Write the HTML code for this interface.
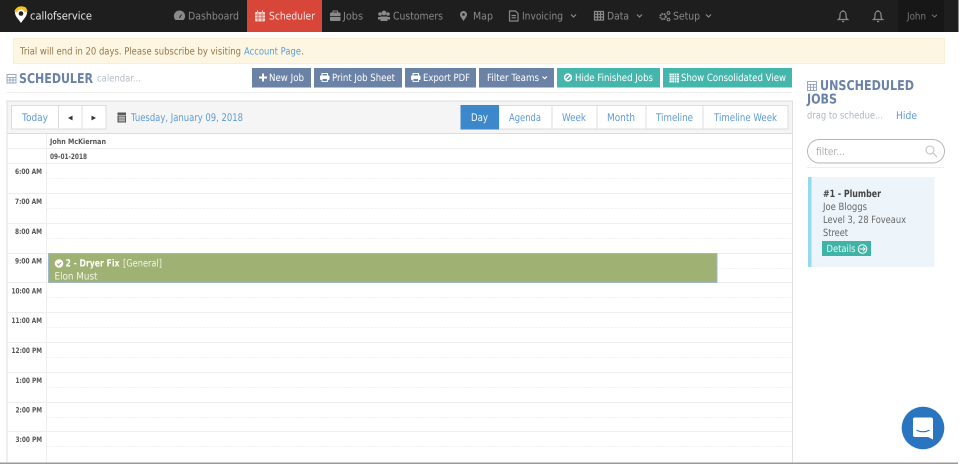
<!DOCTYPE html>
<html><head><meta charset="utf-8"><title>Scheduler</title>
<style>
html,body{margin:0;padding:0;background:#fff;width:960px;height:464px;overflow:hidden}
svg{display:block;position:absolute;left:0;top:0;font-size:10.500px;filter:blur(.3px)}
text{font-family:"DejaVu Sans","Liberation Sans",sans-serif;white-space:pre;text-rendering:geometricPrecision}
.nav{fill:#8a8a8a}
.btn{fill:#fff}
.bl{fill:#5b9bd6}
.t{font-size:7.400px;font-weight:bold;fill:#555}
.h{font-size:13.500px;font-weight:bold;fill:#6a82a6}
.ic{fill:none;stroke:#8a8a8a;stroke-width:1.2}
</style></head><body>
<svg width="960" height="464" viewBox="0 0 960 464">
<rect width="960" height="464" fill="#fff"/>
<!-- nav -->
<rect width="958.500" height="32" fill="#1e1e1e"/>
<rect x="247" width="75" height="32" fill="#d8463a"/>
<rect x="898" width="46" height="32" fill="#171717"/>
<!-- logo -->
<path d="M15 12.500a6 6 0 0 1 12 0c0 4-3.500 6.500-6 10.500C18.500 19 15 16.500 15 12.500z" fill="#fff"/>
<path d="M14.500 12a6.500 5.500 0 0 1 13 0l-3 .5a3.500 3 0 0 0-7 0z" fill="#f3c21c"/>
<path d="M17 9V7.500Q21 5 26 7.500l1 2.500z" fill="#f3c21c"/>
<circle cx="21" cy="13.500" r="2.300" fill="#1e1e1e"/>
<text x="30" y="19.500" font-size="11" fill="#e8e8e8" textLength="62" lengthAdjust="spacingAndGlyphs">callofservice</text>
<!-- nav items -->
<path d="M175.500 20a5.600 5.600 0 1 1 8 0z" fill="#8a8a8a"/><path d="M179.500 18l2-3.500" stroke="#1e1e1e" stroke-width="1"/>
<text class="nav" x="188" y="19.500" textLength="51" lengthAdjust="spacingAndGlyphs">Dashboard</text>
<rect x="255" y="12" width="10" height="9.500" rx="1" fill="#f6d5d1"/><path d="M255 15h10M258 12.500v9M262 12.500v9M255 18h10" stroke="#d8463a" stroke-width=".7"/><path d="M257.500 10.500v2M262.500 10.500v2" stroke="#f6d5d1" stroke-width="1.200"/>
<text x="269" y="19.500" fill="#f7e6e4" textLength="46" lengthAdjust="spacingAndGlyphs">Scheduler</text>
<rect x="330" y="12.500" width="10.500" height="8.500" rx="1" fill="#8a8a8a"/><path d="M333 12.500v-1.500h4.500v1.500" stroke="#8a8a8a" fill="none"/><path d="M330 16.500h10.500" stroke="#1e1e1e" stroke-width=".8"/>
<text class="nav" x="343" y="19.500" textLength="20" lengthAdjust="spacingAndGlyphs">Jobs</text>
<circle cx="384" cy="13" r="2.400" fill="#8a8a8a"/><circle cx="380" cy="14" r="1.800" fill="#8a8a8a"/><circle cx="388" cy="14" r="1.800" fill="#8a8a8a"/><path d="M378 19.500v-2.500h12v2.500zM380.500 21v-4.500h7V21z" fill="#8a8a8a"/>
<text class="nav" x="393" y="19.500" textLength="50" lengthAdjust="spacingAndGlyphs">Customers</text>
<path d="M460 14.500a3.500 3.500 0 0 1 7 0c0 2-2 4-3.500 6.500-1.500-2.500-3.500-4.500-3.500-6.500z" fill="#8a8a8a"/><circle cx="463.500" cy="14.500" r="1.300" fill="#1e1e1e"/>
<text class="nav" x="473" y="19.500" textLength="20" lengthAdjust="spacingAndGlyphs">Map</text>
<path class="ic" d="M509.500 11h6l2.500 2.500V21h-8.500zM511.500 15.500h4.500M511.500 17.800h4.500"/>
<text class="nav" x="522" y="19.500" textLength="41" lengthAdjust="spacingAndGlyphs">Invoicing</text>
<path class="ic" d="M571 14.500l2.500 2.500 2.500-2.500"/>
<path class="ic" d="M594.500 11.500h9v8.500h-9zM594.500 14.300h9M594.500 17.100h9M597.500 11.500V20M600.500 11.500V20"/>
<text class="nav" x="607" y="19.500" textLength="22" lengthAdjust="spacingAndGlyphs">Data</text>
<path class="ic" d="M637 14.500l2.500 2.500 2.500-2.500"/>
<circle cx="663" cy="16.500" r="2.700" fill="none" stroke="#8a8a8a" stroke-width="1.900" stroke-dasharray="1.500 .7"/><circle cx="668.500" cy="13" r="1.400" fill="none" stroke="#8a8a8a"/><circle cx="668.500" cy="19.500" r="1.400" fill="none" stroke="#8a8a8a"/>
<text class="nav" x="673" y="19.500" textLength="27" lengthAdjust="spacingAndGlyphs">Setup</text>
<path class="ic" d="M706 14.500l2.500 2.500 2.500-2.500"/>
<path class="ic" d="M838.500 19.500c1.500-1 1.500-2.500 1.500-4.500 0-2 1-3.800 3-3.800s3 1.800 3 3.800c0 2 0 3.500 1.500 4.500zM842 21.500h2.200M843 11v-1"/>
<path class="ic" d="M873.500 19.500c1.500-1 1.500-2.500 1.500-4.500 0-2 1-3.800 3-3.800s3 1.800 3 3.800c0 2 0 3.500 1.500 4.500zM877 21.500h2.200M878 11v-1"/>
<text x="907" y="19.500" font-size="10" fill="#777" textLength="19" lengthAdjust="spacingAndGlyphs">John</text>
<path d="M932 14.800l2.500 2.200 2.500-2.200" fill="none" stroke="#777"/>
<!-- alert -->
<rect x="13.500" y="38.500" width="931" height="25" fill="#fdf6e3" stroke="#faefd2"/>
<text x="20" y="54.500" font-size="10" fill="#94784a" textLength="221" lengthAdjust="spacingAndGlyphs">Trial will end in 20 days. Please subscribe by visiting</text>
<text x="244" y="54.500" font-size="10" class="bl" textLength="57" lengthAdjust="spacingAndGlyphs">Account Page</text>
<text x="301" y="54.500" font-size="10" fill="#94784a">.</text>
<!-- heading -->
<g fill="none" stroke="#9aa9bd" stroke-width="1"><rect x="7" y="74.500" width="9" height="8.500"/><path d="M7 77.500h9M7 80h9M10 77.500V83M13 77.500V83"/></g>
<text class="h" x="19" y="83" textLength="74" lengthAdjust="spacingAndGlyphs">SCHEDULER</text>
<text x="97" y="81.500" font-size="10" fill="#b4bcc8" textLength="44" lengthAdjust="spacingAndGlyphs">calendar...</text>
<rect x="6" y="92" width="786" height="1" fill="#eeeeee"/>
<!-- buttons -->
<g fill="#6a82a6"><rect x="252" y="68" width="59" height="19.500"/><rect x="314" y="68" width="88" height="19.500"/><rect x="405" y="68" width="71" height="19.500"/><rect x="479" y="68" width="75" height="19.500"/></g>
<g fill="#45b6ac"><rect x="557" y="68" width="103" height="19.500"/><rect x="663" y="68" width="129" height="19.500"/></g>
<path d="M259 77.500h8M263 73.500v8" stroke="#fff" stroke-width="2"/>
<text class="btn" x="269" y="81" font-size="10" textLength="35" lengthAdjust="spacingAndGlyphs">New Job</text>
<g id="pr"><rect x="320" y="75.500" width="9.500" height="4.500" rx="1" fill="#fff"/><rect x="322" y="73.500" width="5.500" height="3" fill="none" stroke="#fff"/><rect x="322" y="78.500" width="5.500" height="3" fill="#6a82a6" stroke="#fff" stroke-width=".9"/></g>
<text class="btn" x="332" y="81" font-size="10" textLength="63" lengthAdjust="spacingAndGlyphs">Print Job Sheet</text>
<use href="#pr" x="91"/>
<text class="btn" x="423" y="81" font-size="10" textLength="47" lengthAdjust="spacingAndGlyphs">Export PDF</text>
<text class="btn" x="487" y="81" font-size="10" textLength="52" lengthAdjust="spacingAndGlyphs">Filter Teams</text>
<path d="M542.500 76.500l2.200 2.200 2.200-2.200" fill="none" stroke="#fff" stroke-width="1.200"/>
<circle cx="568" cy="77.500" r="3.400" fill="none" stroke="#fff" stroke-width="1.500"/><path d="M565.800 79.700l4.400-4.400" stroke="#fff" stroke-width="1.300"/>
<text class="btn" x="575" y="81" font-size="10" textLength="78" lengthAdjust="spacingAndGlyphs">Hide Finished Jobs</text>
<rect x="669.500" y="73.500" width="9.500" height="9" fill="#fff"/><path d="M669.500 75.500h9.500M669.500 77.800h9.500M669.500 80.100h9.500M672 73v9.500M674.300 73v9.500M676.600 73v9.500" stroke="#45b6ac" stroke-width=".6"/>
<text class="btn" x="681" y="81" font-size="10" textLength="105" lengthAdjust="spacingAndGlyphs">Show Consolidated View</text>
<!-- calendar frame -->
<rect x="7" y="101" width="785.500" height="32.500" fill="#f5f5f5"/>
<path d="M7 101h785.500M7 133.500h785.500" stroke="#dcdcdc" stroke-width="1"/>
<rect x="6.500" y="100.500" width="1" height="364" fill="#dfdfdf"/><rect x="792" y="100.500" width="1" height="364" fill="#dfdfdf"/>
<g fill="#fff" stroke="#dcdcdc"><rect x="11.500" y="105.500" width="47" height="23.500"/><rect x="58.500" y="105.500" width="23.500" height="23.500"/><rect x="82" y="105.500" width="24" height="23.500"/></g>
<text class="bl" x="22" y="121" font-size="10.500" textLength="26" lengthAdjust="spacingAndGlyphs">Today</text>
<path d="M68 118l4.500-2.400v4.800zM96 118l-4.500-2.400v4.800z" fill="#333"/>
<rect x="117.500" y="112.500" width="8.500" height="10" fill="#555"/><path d="M117.500 115.200h8.500M118.500 117.300h6.500M118.500 119h6.500M118.500 120.800h6.500M120 115.500v6.500M122 115.500v6.500M124 115.500v6.500" stroke="#f5f5f5" stroke-width=".5"/>
<text class="bl" x="131" y="121" font-size="10.500" textLength="112" lengthAdjust="spacingAndGlyphs">Tuesday, January 09, 2018</text>
<g fill="#fff" stroke="#dcdcdc"><rect x="499" y="105.500" width="53" height="23.500"/><rect x="552" y="105.500" width="45" height="23.500"/><rect x="597" y="105.500" width="49" height="23.500"/><rect x="646" y="105.500" width="57" height="23.500"/><rect x="703" y="105.500" width="85" height="23.500"/></g>
<rect x="460.500" y="105" width="38.500" height="24.500" fill="#3d88cb"/>
<text x="471" y="121" fill="#f2f7fb" font-size="10.500" textLength="17" lengthAdjust="spacingAndGlyphs">Day</text>
<text class="bl" x="509" y="121" font-size="10.500" textLength="32" lengthAdjust="spacingAndGlyphs">Agenda</text>
<text class="bl" x="562" y="121" font-size="10.500" textLength="24" lengthAdjust="spacingAndGlyphs">Week</text>
<text class="bl" x="607" y="121" font-size="10.500" textLength="28" lengthAdjust="spacingAndGlyphs">Month</text>
<text class="bl" x="656" y="121" font-size="10.500" textLength="37" lengthAdjust="spacingAndGlyphs">Timeline</text>
<text class="bl" x="714" y="121" font-size="10.500" textLength="63" lengthAdjust="spacingAndGlyphs">Timeline Week</text>
<!-- grid -->
<g stroke="#eeeeee" stroke-width="1"><path d="M46.500 134v330"/><path d="M7 148.500h785M7 163.500h785M7 193.500h785M7 223.500h785M7 253.500h785M7 282.500h785M7 312.500h785M7 342.500h785M7 372.500h785M7 402.500h785M7 431.500h785"/></g>
<g stroke="#f2f2f2" stroke-width="1" stroke-dasharray="2 1"><path d="M47 178.500h745M47 208.500h745M47 238.500h745M47 268.500h745M47 297.500h745M47 327.500h745M47 357.500h745M47 387.500h745M47 417.500h745M47 446.500h745"/></g>
<text class="t" x="50" y="144" textLength="56" lengthAdjust="spacingAndGlyphs">John McKiernan</text>
<text class="t" x="50" y="159" textLength="37" lengthAdjust="spacingAndGlyphs">09-01-2018</text>
<text class="t" x="15" y="174" textLength="27" lengthAdjust="spacingAndGlyphs">6:00 AM</text>
<text class="t" x="15" y="204" textLength="27" lengthAdjust="spacingAndGlyphs">7:00 AM</text>
<text class="t" x="15" y="234" textLength="27" lengthAdjust="spacingAndGlyphs">8:00 AM</text>
<text class="t" x="15" y="263.500" textLength="27" lengthAdjust="spacingAndGlyphs">9:00 AM</text>
<text class="t" x="11.500" y="293.500" textLength="30.500" lengthAdjust="spacingAndGlyphs">10:00 AM</text>
<text class="t" x="11.500" y="323" textLength="30.500" lengthAdjust="spacingAndGlyphs">11:00 AM</text>
<text class="t" x="11.500" y="353" textLength="30.500" lengthAdjust="spacingAndGlyphs">12:00 PM</text>
<text class="t" x="15.500" y="383" textLength="26.500" lengthAdjust="spacingAndGlyphs">1:00 PM</text>
<text class="t" x="15.500" y="412.500" textLength="26.500" lengthAdjust="spacingAndGlyphs">2:00 PM</text>
<text class="t" x="15.500" y="442" textLength="26.500" lengthAdjust="spacingAndGlyphs">3:00 PM</text>
<!-- event -->
<rect x="48.500" y="253.500" width="668.500" height="29" fill="#a0b174" stroke="#9fb8cf"/>
<circle cx="59" cy="263.500" r="4.300" fill="#fff"/><path d="M57 263.500l1.600 1.600 2.600-2.800" fill="none" stroke="#a0b174" stroke-width="1.200"/>
<text x="65.500" y="266.500" font-size="10" font-weight="bold" fill="#fff" textLength="54" lengthAdjust="spacingAndGlyphs">2 - Dryer Fix</text>
<text x="123" y="266.500" font-size="10" fill="#f3f5ea" textLength="39" lengthAdjust="spacingAndGlyphs">[General]</text>
<text x="54.500" y="279.500" font-size="10" fill="#f3f5ea" textLength="43" lengthAdjust="spacingAndGlyphs">Elon Must</text>
<!-- right panel -->
<g fill="none" stroke="#9aa9bd" stroke-width="1"><rect x="807.500" y="81.500" width="9" height="9"/><path d="M807.500 84.500h9M807.500 87.300h9M810.500 84.500v6M813.500 84.500v6"/></g>
<text class="h" x="820" y="90" textLength="94" lengthAdjust="spacingAndGlyphs">UNSCHEDULED</text>
<text class="h" x="807" y="103.500" textLength="30" lengthAdjust="spacingAndGlyphs">JOBS</text>
<text x="807" y="118.500" font-size="10" fill="#aeb7c2" textLength="76" lengthAdjust="spacingAndGlyphs">drag to schedue...</text>
<text class="bl" x="896" y="119" font-size="10.500" textLength="21" lengthAdjust="spacingAndGlyphs">Hide</text>
<rect x="807.500" y="139.500" width="137" height="23.500" rx="11.700" fill="#fff" stroke="#b5b5b5"/>
<text x="816" y="155" font-size="10.500" fill="#b0b0b0" textLength="29" lengthAdjust="spacingAndGlyphs">filter...</text>
<circle cx="930" cy="150" r="4" fill="none" stroke="#c4c4c4" stroke-width="1.100"/><path d="M933 153l4 4" stroke="#c4c4c4" stroke-width="1.100"/>
<rect x="807" y="167" width="137" height="1" fill="#efefef"/>
<rect x="808" y="177" width="126.500" height="90" fill="#edf5fb"/>
<rect x="808" y="177" width="3.500" height="90" fill="#93dbe9"/>
<text x="823" y="197" font-size="10" font-weight="bold" fill="#444" textLength="58" lengthAdjust="spacingAndGlyphs">#1 - Plumber</text>
<text x="823" y="210" font-size="10" fill="#666" textLength="44" lengthAdjust="spacingAndGlyphs">Joe Bloggs</text>
<text x="823" y="223" font-size="10" fill="#666" textLength="83" lengthAdjust="spacingAndGlyphs">Level 3, 28 Foveaux</text>
<text x="823" y="236" font-size="10" fill="#666" textLength="25" lengthAdjust="spacingAndGlyphs">Street</text>
<rect x="822" y="241" width="49" height="15" fill="#3fb3a5"/>
<text x="826.500" y="252" font-size="10" fill="#e9f7f5" textLength="29" lengthAdjust="spacingAndGlyphs">Details</text>
<circle cx="862.500" cy="249" r="4.300" fill="none" stroke="#fff"/><path d="M859.500 249h5.500M863 246.800l2.200 2.200-2.200 2.200" fill="none" stroke="#fff" stroke-width=".9"/>
<!-- messenger -->
<circle cx="923" cy="428" r="22" fill="#000" opacity=".05"/>
<circle cx="923" cy="428" r="21.300" fill="#2a74c0"/>
<path d="M913 419.500a2 2 0 0 1 2-2h16a2 2 0 0 1 2 2v20l-5-2.500h-13a2 2 0 0 1-2-2z" fill="#fff"/>
<path d="M916.500 430c3.500 2.300 9.500 2.300 13 0" fill="none" stroke="#2a74c0" stroke-width="1.100"/>
<!-- bottom strip -->
<rect x="0" y="462.500" width="958" height="1.500" fill="#9a9a9a"/>
</svg>
</body></html>
